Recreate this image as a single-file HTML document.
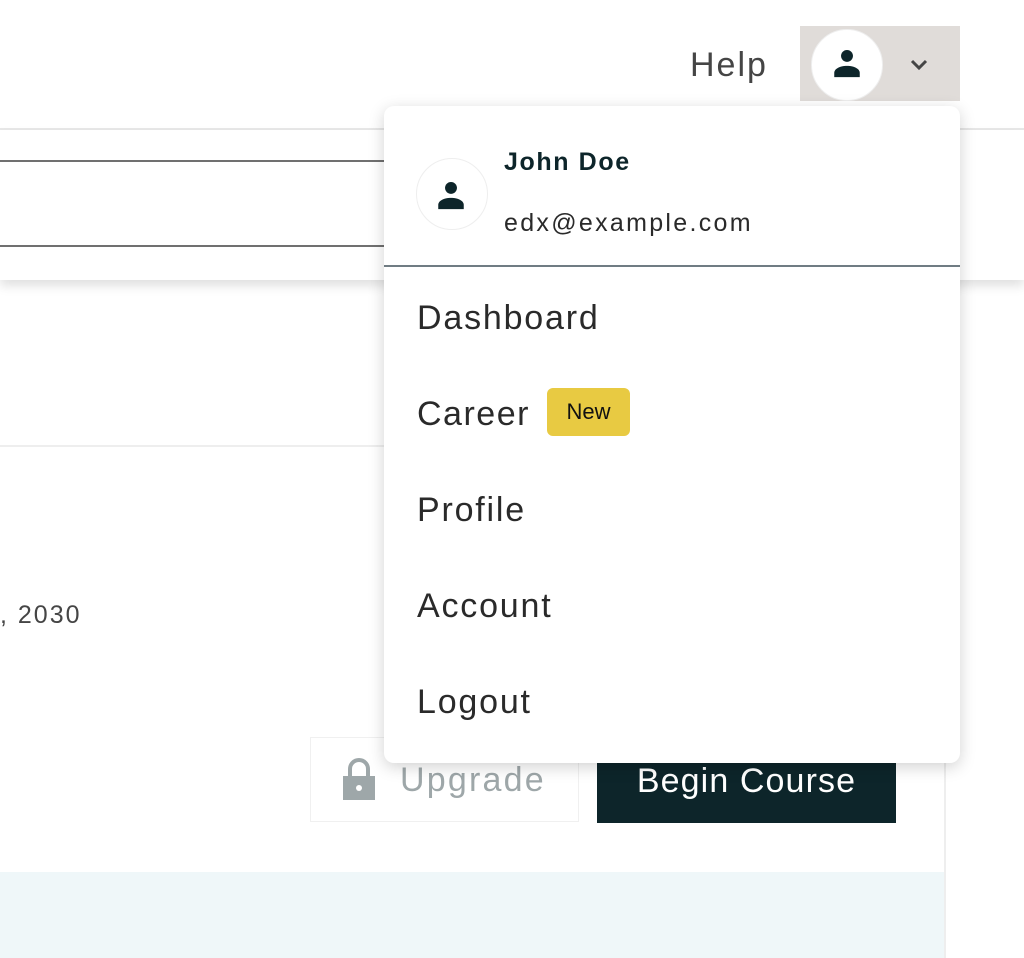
<!DOCTYPE html>
<html><head><style>
body{margin:0;width:1024px;height:958px;position:relative;overflow:hidden;background:#fff;font-family:"Liberation Sans",sans-serif;color:#2a2a2a}
.a{position:absolute}
.m{font-size:34px;letter-spacing:1.8px}
</style></head><body>
<div class="a" style="left:0;top:128px;width:1024px;height:2px;background:#e8e8e8"></div>
<div class="a" style="left:0;top:130px;width:1024px;height:150px;background:#fff;box-shadow:0 6px 10px rgba(0,0,0,.12)"></div>
<div class="a" style="left:0;top:160px;width:400px;height:2px;background:#707070"></div>
<div class="a" style="left:0;top:245px;width:400px;height:2px;background:#707070"></div>
<div class="a" style="left:0;top:445px;width:945px;height:2px;background:#eee"></div>
<div class="a" style="left:944px;top:446px;width:2px;height:512px;background:#eee"></div>
<div class="a" style="left:0;top:601px;font-size:25px;letter-spacing:2px;color:#454545">, 2030</div>
<div class="a" style="left:310px;top:737px;width:269px;height:85px;border:1px solid #f0f0f0;box-sizing:border-box"></div>
<svg class="a" style="left:342px;top:758px" width="34" height="42" viewBox="0 0 34 42"><path d="M8 18V11a9 9 0 0 1 18 0v7" fill="none" stroke="#9ea7a9" stroke-width="4"/><rect x="1" y="18" width="32" height="24" fill="#9ea7a9"/><circle cx="17" cy="30" r="3" fill="#fff"/></svg>
<div class="a" style="left:400px;top:761px;font-size:34px;letter-spacing:2.2px;color:#9ea7a9">Upgrade</div>
<div class="a" style="left:597px;top:740px;width:299px;height:83px;background:#0d252a;color:#fff;font-size:34px;letter-spacing:1.1px;text-align:center;line-height:82px">Begin Course</div>
<div class="a" style="left:0;top:872px;width:944px;height:86px;background:#eff7f9"></div>
<div class="a" style="left:690px;top:46px;font-size:34px;letter-spacing:2px;color:#454545">Help</div>
<div class="a" style="left:800px;top:26px;width:160px;height:75px;background:#e0dcd9"></div>
<div class="a" style="left:811px;top:29px;width:70px;height:70px;border-radius:50%;background:#fff;border:1px solid #eee"></div>
<svg class="a" style="left:830px;top:46px" width="34" height="34" viewBox="0 0 24 24"><circle cx="12" cy="7" r="4.2" fill="#0d252a"/><path d="M3 22v-3c0-3 4-5 9-5s9 2 9 5v3z" fill="#0d252a"/></svg>
<svg class="a" style="left:909px;top:58px" width="20" height="14" viewBox="0 0 20 14"><path d="M3 3l7 7 7-7" fill="none" stroke="#454545" stroke-width="3"/></svg>
<div class="a" style="left:384px;top:106px;width:576px;height:657px;background:#fff;border-radius:10px;box-shadow:0 4px 16px rgba(0,0,0,.18)">
 <div class="a" style="left:32px;top:52px;width:70px;height:70px;border-radius:50%;border:1px solid #eee"></div>
 <svg class="a" style="left:50px;top:72px" width="34" height="34" viewBox="0 0 24 24"><circle cx="12" cy="7" r="4.2" fill="#0d252a"/><path d="M3 22v-3c0-3 4-5 9-5s9 2 9 5v3z" fill="#0d252a"/></svg>
 <div class="a" style="left:120px;top:42px;font-size:25px;letter-spacing:1.6px;font-weight:bold;color:#0d252a">John Doe</div>
 <div class="a" style="left:120px;top:103px;font-size:25px;letter-spacing:2.3px;color:#2a2a2a">edx@example.com</div>
 <div class="a" style="left:0;top:159px;width:576px;height:2px;background:#707c83"></div>
 <div class="a m" style="left:33px;top:193px">Dashboard</div>
 <div class="a m" style="left:33px;top:289px;letter-spacing:1.5px">Career</div>
 <div class="a" style="left:163px;top:282px;width:83px;height:48px;background:#e8ca42;border-radius:6px;font-size:22px;line-height:48px;text-align:center;color:#111">New</div>
 <div class="a m" style="left:33px;top:385px">Profile</div>
 <div class="a m" style="left:33px;top:481px">Account</div>
 <div class="a m" style="left:33px;top:577px">Logout</div>
</div>
</body></html>
